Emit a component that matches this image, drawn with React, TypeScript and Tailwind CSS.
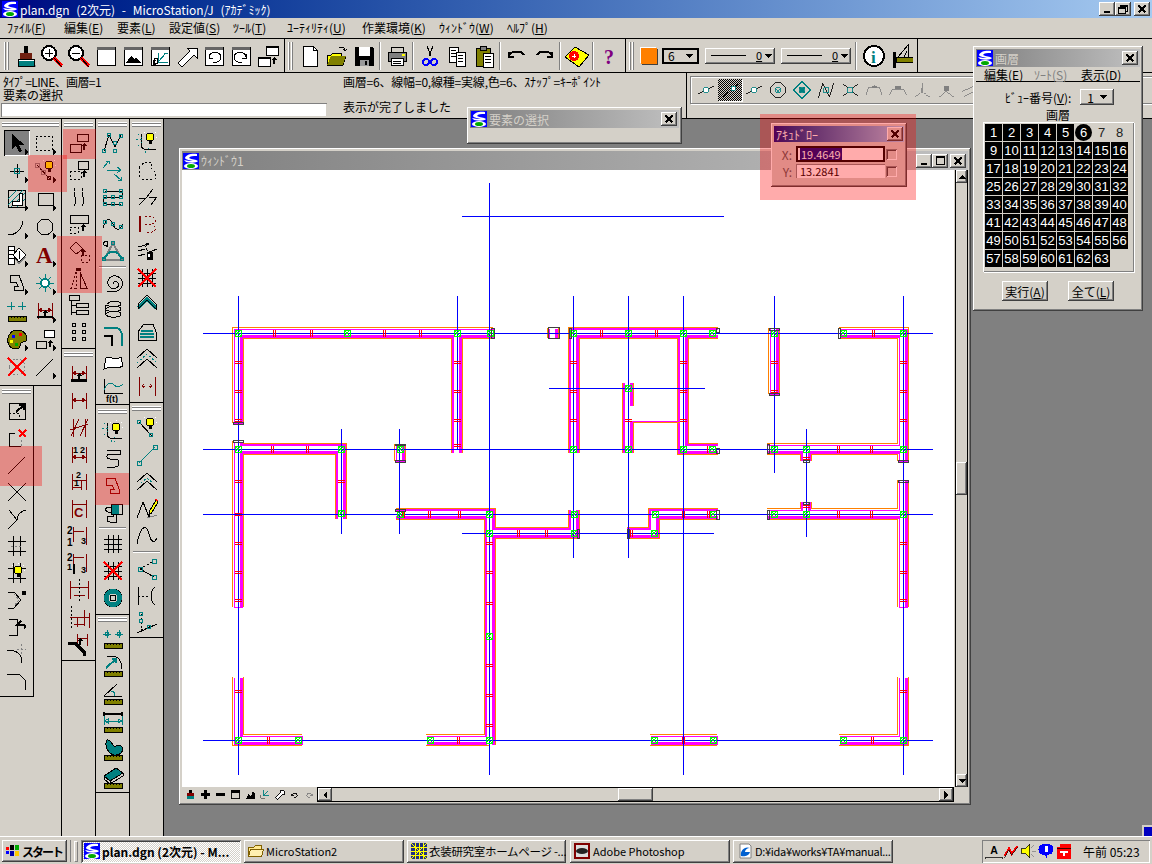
import React from "react";

const k = "#000", t = "#008080", r = "#800000", R = "#f00", g = "#808080", o = "#808000", y = "#ff0", w = "#fff", n = "#00f";
type P = [string, string, string?, number?, number?, number?];

const raised = "shadow-[inset_-1px_-1px_#404040,inset_1px_1px_#fff,inset_-2px_-2px_#808080]";
const sunken = "shadow-[inset_1px_1px_#808080,inset_-1px_-1px_#fff,inset_2px_2px_#404040]";

const c = (x: number, yy: number, rad: number) => `M${x - rad} ${yy}a${rad} ${rad} 0 1 0 ${2 * rad} 0a${rad} ${rad} 0 1 0 ${-2 * rad} 0Z`;
const sq = (x: number, yy: number, s = 1.5) => `M${x - s} ${yy - s}h${2 * s}v${2 * s}h${-2 * s}Z`;
const tri: P[] = [[k, "M20 18L23 21L20 24Z", "f"]];
const ruler: P[] = [[o, "M3 17H21V22H3Z", "f"], [k, "M3 17H21V22H3Z M6 17V19 M9 17V19 M12 17V19 M15 17V19 M18 17V19"]];
const dim: P[] = [[r, "M5 4V20 M19 4V20 M5 11H19"], [r, "M5 11l4-2.5v5Z M19 11l-4-2.5v5Z", "f"]];
const up = (x: number, yy: number): P => [k, `M${x} ${yy}l-3 3h2v4h2v-4h2Z`, "f"];
const bulb = (x: number, yy: number): P[] => [[y, c(x, yy, 4), "f"], [k, c(x, yy, 4)], [k, `M${x - 1.5} ${yy + 4}h3v3h-3Z`, "f"], [w, `M${x} ${yy - 6}v-1 M${x + 5} ${yy - 4}l1-1 M${x - 5} ${yy - 4}l-1-1 M${x + 6} ${yy}h1`]];
const grid: P = [k, "M7 3V21 M12 3V21 M17 3V21 M3 7H21 M3 12H21 M3 17H21"];
const redX: P = [R, "M3 3L21 21 M21 3L3 21", "2"];

function Ico({ p, s = 24 }: { p: P[]; s?: number }) {
  return (
    <svg width={s} height={s} viewBox="0 0 24 24" shapeRendering="crispEdges" className="block">
      {p.map((i, idx) =>
        i[2] === "t" ? (
          <text key={idx} x={i[3]} y={i[4]} fontSize={i[5]} fill={i[0]} fontFamily={(i[5] ?? 0) >= 17 ? "Liberation Serif" : "Liberation Sans"} fontWeight="bold">{i[1]}</text>
        ) : (
          <path
            key={idx}
            d={i[1]}
            fill={i[2] === "f" ? i[0] : "none"}
            stroke={i[2] === "f" ? "none" : i[0]}
            strokeWidth={i[2] === "2" ? 2 : i[2] === "3" ? 3 : 1}
            strokeDasharray={i[2] === "d" ? "2 2" : undefined}
          />
        )
      )}
    </svg>
  );
}

function Logo({ s = 16 }: { s?: number }) {
  return (
    <svg width={s} height={s} viewBox="0 0 16 16" className="block shrink-0">
      <rect width="16" height="16" fill="#00f" />
      <path d="M2 5C3 1 10 0 14 1L14 3C10 3 7 3 6 5C9 7 13 6 15 8C14 10 8 10 3 9L1 7C5 8 8 8 10 8C7 7 3 7 2 5Z" fill="#fff" />
      <ellipse cx="8" cy="13" rx="7" ry="3" fill="#fff" />
      <ellipse cx="8" cy="13" rx="4" ry="2" fill="#0a0" />
    </svg>
  );
}

function Arrow({ dir }: { dir: "u" | "d" | "l" | "r" }) {
  const d = dir === "u" ? "M4 2L0 6H8Z" : dir === "d" ? "M0 2H8L4 6Z" : dir === "l" ? "M6 0V8L2 4Z" : "M2 0V8L6 4Z";
  return <svg width="8" height="8" viewBox="0 0 8 8" shapeRendering="crispEdges"><path d={d} fill="#000" /></svg>;
}

function CloseBtn({ className = "" }: { className?: string }) {
  return (
    <div className={`w-[16px] h-[14px] bg-[#d4d0c8] flex items-center justify-center ${raised} ${className}`}>
      <svg width="8" height="8" viewBox="0 0 8 8" shapeRendering="crispEdges"><path d="M0.5 0.5L7.5 7.5M7.5 0.5L0.5 7.5" stroke="#000" strokeWidth="1.6" /></svg>
    </div>
  );
}

const win: P[] = [[w, "M3 3H21V21H3Z", "f"], [k, "M3 3H21V21H3Z"], ["#666", "M3 3H21V6H3Z", "f"]];

const tools1: P[][] = [
  [["#999", "M8 21H23V23H8Z", "f"], [k, "M11 2H15V9H11Z", "f"], ["#702010", "M7 9H19V15H7Z", "f"], [w, "M5 15H21V17H5Z", "f"], [t, "M5 17H21V22H5Z", "f"], [k, "M5 15H21V22H5Z"]],
  [[w, c(9, 9, 7), "f"], [k, c(9, 9, 7), "2"], [k, "M5 9H13 M9 5V13"], [R, "M14 14L22 22", "3"], [k, "M14 14L22 23"]],
  [[w, c(9, 9, 7), "f"], [k, c(9, 9, 7), "2"], [k, "M5 9H13"], [R, "M14 14L22 22", "3"], [k, "M14 14L22 23"]],
  win,
  [...win, [k, "M5 19L10 12L13 15L15 13L20 19Z", "f"]],
  [...win, [k, "M5 20V16H8 M5 20H8"], [t, "M10 9V18H20 M10 18L18 9 M16 9L20 9"], [k, "M6 14H9V19H6Z"]],
  [[w, "M3 19L15 7L12 4H22V14L19 11L7 23Z", "f"], [k, "M3 19L15 7L12 4H22V14L19 11L7 23Z"]],
  [...win, [k, "M7 13a6 5 0 1 1 4 5 M7 10V14H11"]],
  [...win, [k, "M17 13a6 5 0 1 0 -4 5 M17 10V14H13"]],
  [[w, "M10 2H22V11H10Z", "f"], [k, "M10 2H22V11H10Z"], [k, "M10 2H22V4H10Z", "f"], [w, "M2 13H14V22H2Z", "f"], [k, "M2 13H14V22H2Z"], [k, "M2 13H14V15H2Z", "f"], up(18, 13)],
];
const tools2: P[][] = [
  [[w, "M5 2H15L19 6V22H5Z", "f"], [k, "M5 2H15L19 6V22H5Z M15 2V6H19"]],
  [[y, "M2 11H6L8 9H16V12H21L18 21H2Z", "f"], [k, "M2 11H6L8 9H16V12H21L18 21H2Z"], [o, "M2 21L6 12H21L18 21Z", "f"], [k, "M14 4C17 2 20 3 20 7M20 7L18 5M20 7L22 5"]],
  [[k, "M3 3H20L22 5V22H3Z", "f"], [w, "M7 3H18V12H7Z", "f"], ["#999", "M8 16H17V22H8Z", "f"], [k, "M13 17H15V21H13Z", "f"]],
  [],
  [[k, "M6 3H18V8H6Z"], [g, "M3 8H21V17H3Z", "f"], [k, "M3 8H21V17H3Z"], [y, "M17 10H20V12H17Z", "f"], [w, "M6 14H18V21H6Z", "f"], [k, "M6 14H18V21H6Z M8 17H16 M8 19H16"]],
  [],
  [[k, "M9 2L13 12 M15 2L11 12"], [n, c(8, 18, 3), "2"], [n, c(16, 18, 3), "2"]],
  [[w, "M4 3H13V18H4Z", "f"], [k, "M4 3H13V18H4Z M6 6H11 M6 9H11 M6 12H11"], [w, "M11 8H20V22H11Z", "f"], [k, "M11 8H20V22H11Z M13 11H18 M13 14H18 M13 17H18"]],
  [[o, "M4 4H18V22H4Z", "f"], [k, "M4 4H18V22H4Z"], [g, "M8 2H14V6H8Z", "f"], [k, "M8 2H14V6H8Z"], [w, "M11 9H21V23H11Z", "f"], [k, "M11 9H21V23H11Z M13 12H19 M13 15H19 M13 18H19"]],
  [],
  [[k, "M4 12a8 6 0 0 1 15 -1 M4 8V13H9", "2"]],
  [[k, "M20 12a8 6 0 0 0 -15 -1 M20 8V13H15", "2"]],
  [],
  [[y, "M0 13L10 3L24 11L14 23Z", "f"], [k, "M0 13L10 3L24 11L14 23Z"], [R, c(9, 12, 5), "f"], [w, "M7 12h4M9 10v4"]],
  [],
  [["#800080", "?", "t", 6, 20, 20]],
];

const snaps: P[][] = [
  [[k, "M2 17L22 7"], [w, sq(12, 12, 2.5), "f"], [t, sq(12, 12, 2.5)]],
  [[k, "M2 21L22 5"], [w, sq(16, 10, 2.5), "f"], [t, sq(16, 10, 2.5)]],
  [[k, "M2 17L22 7"], [w, sq(12, 12, 2.5), "f"], [t, sq(12, 12, 2.5)]],
  [[k, c(12, 12, 9)], [t, "M9 9L15 15M15 9L9 15"], [t, sq(12, 12, 2.5)]],
  [[t, "M12 2L22 12L12 22L2 12Z M9 9L15 15M15 9L9 15", "2"], [t, sq(12, 12, 3)]],
  [[k, "M3 21L8 4L16 20L21 3"], [t, sq(12, 12, 3)]],
  [[k, "M3 5L10 11M21 5L14 11M3 19L10 13M21 19L14 13"], [t, sq(12, 12, 3)]],
  [[g, "M2 18L5 9H19L22 18 M12 9V6"], [g, "M9 7H15V9H9Z", "f"]],
  [[g, "M2 18L5 11H19L22 18"], [g, "M8 7H16V11H8Z", "f"]],
  [[g, "M3 20C8 18 11 16 12 10C13 16 16 18 21 20 M12 4V10"]],
  [[g, "M3 20C8 18 11 16 12 12C13 16 16 18 21 20"], [g, "M9 7H15V13H9Z", "f"]],
  [[g, "M2 14L20 6M5 20L22 11"]],
];

const col1a: P[][] = [
  [[k, "M7 3L7 18L11 14.5L14 21L17 20L14 13.5L19 13.5Z", "f"], ...tri],
  [[k, "M3 5H19V19H3Z", "d"], ...tri],
  [[k, "M12 5V19M5 12H19"], [t, sq(12, 12, 2.5)], ...tri],
  [[k, "M4 6L17 20"], [g, sq(4, 6, 2)], [g, sq(10, 13, 2)], [k, sq(16, 19, 1.5)], ...bulb(16, 6), ...tri],
  [[k, "M3 3H20V20H3Z"], [t, "M3 12L12 3M3 18L18 3M6 20L20 6M12 20L20 12"], [w, "M7 14H14V6H17V18H7Z", "f"], [k, "M7 14H14V6H17V18H7Z"], ...tri],
  [[k, "M5 6H20V18H5Z"], ...tri],
  [[k, "M3 20C11 20 17 14 18 6"], ...tri],
  [[k, c(12, 12, 8)], ...tri],
  [[w, "M3 3H9V21H3Z", "f"], [k, "M3 3H9V21H3Z M3 7H9M3 11H9M3 15H9"], [g, "M10 14L14 20L20 14", "2"], [w, "M14 5L21 12L14 19L8 12Z", "f"], [k, "M14 5L21 12L14 19L8 12Z M14 8V16"], ...tri],
  [[r, "A", "t", 3, 20, 23], ...tri],
  [[k, "M5 4H14L18 15V19H9V15H13L11 11H5Z"], ...tri],
  [[t, "M12 3V21M3 12H21M6 6L18 18M18 6L6 18"], [w, c(12, 12, 4), "f"], [t, c(12, 12, 4), "2"], ...tri],
  [[t, "M6 3V11M2 7H10M17 3V11M13 7H21"], ...ruler],
  [...dim, [k, "M4 17H20V19H4Z", "f"], up(12, 11), ...tri],
  [[o, "M12 3C19 3 22 8 22 12C22 16 18 14 16 16C14 18 17 22 11 22C5 22 2 17 3 11C4 6 8 3 12 3Z", "f"], [k, "M12 3C19 3 22 8 22 12C22 16 18 14 16 16C14 18 17 22 11 22C5 22 2 17 3 11C4 6 8 3 12 3Z"], [R, sq(15, 7), "f"], [n, sq(8, 9), "f"], [y, sq(6, 14), "f"], ["#0a0", sq(11, 17), "f"], ...tri],
  [[w, "M11 3H21V11H11Z", "f"], [k, "M11 3H21V10H11Z"], [k, "M3 14H13V21H3Z"], up(17, 13), ...tri],
  [[g, c(12, 12, 8), "d"], redX],
  [[k, "M3 21L20 4"], ...tri],
];
const col1b: P[][] = [
  [[k, "M4 4H20V20H4Z"], [k, "M4 14H14V20", "d"], [k, "M11 13L19 6M14 6H19V11", "2"]],
  [[k, "M4 7V20H16"], [k, "M4 7H10"], [R, "M14 4L21 11M21 4L14 11", "2"], [g, "M16 14V20", "d"]],
  [[k, "M3 21L20 4"]],
  [[k, "M3 3L21 21M21 3L3 21"]],
  [[k, "M3 22L12 13M12 13C12 7 17 4 21 3M4 3L12 13"]],
  [[k, "M3 7H21M3 17H21M8 2V22M15 2V22"], [g, "M6 12H17", "d"]],
  [[k, "M3 7H21M3 17H21M8 2V22M15 2V22"], ...bulb(13, 9)],
  [[k, "M3 4H9L16 12L9 20H3"], [g, "M9 6L14 12L9 18", "d"], [k, "M17 3H21V7H17Z", "f"]],
  [[k, "M4 4H12V20H4"], [k, "M16 6L12 10L16 10C20 9 21 12 19 14", "2"]],
  [[k, "M2 8C11 8 17 12 17 21"], [g, "M16 2V12M12 7H21", "d"]],
  [[k, "M2 5H14L20 11V21"]],
];
const col2a: P[][] = [
  [[k, "M10 3H21V10H10Z"], [k, "M3 13H14V21H3Z"], up(17, 12)],
  [[k, "M11 3H21V11H11Z"], [k, "M3 13H14V21H3Z", "d"], up(17, 12)],
  [[k, "M8 3C4 8 12 14 7 21M16 3C12 8 20 14 15 21"]],
  [[k, "M3 3H21V11H3Z"], [k, "M3 15H11V21H3Z", "d"], up(16, 12)],
  [[k, "M9 3L16 10L9 15L3 9Z"], [k, "M14 16H22V23H14Z", "d"], up(16, 10)],
  [[k, "M9 6L4 22H9Z", "d"], [k, "M13 6L20 22H13Z"], [k, "M9 2H14V5H9Z", "f"]],
  [[k, "M2 2H12V7H2Z M9 10H21V14H9Z M9 17H21V21H9Z M4 7V22 M4 12H9 M4 19H9"]],
  [[k, c(7, 5, 2) + c(17, 5, 2) + c(7, 12, 2) + c(17, 12, 2) + c(7, 19, 2) + c(17, 19, 2)]],
];
const col2b: P[][] = [
  [...dim, [k, "M4 17H20V20H4Z", "f"], up(12, 11)],
  dim,
  [[r, "M6 3V21M18 3V21M3 14L21 8M4 20L12 3M13 20L21 3"]],
  [...dim.map((d): P => [d[0], d[1].replace(/11/g, "14"), d[2]]), [k, "1", "t", 6, 10, 9], [k, "2", "t", 13, 10, 9]],
  [[r, "M5 4V20M19 4V20M5 10H19M5 17H14M14 10V20"], [k, "2", "t", 9, 8, 9], [k, "1", "t", 7, 16, 9]],
  [[r, "M5 3V21M19 3V21M5 7H19"], [r, "C", "t", 7, 20, 13]],
  [[r, "M6 7H17M6 3V18M19 3V21"], [k, "2", "t", 0, 10, 10], [k, "1", "t", 0, 22, 10], [k, "3", "t", 14, 20, 9]],
  [[r, "M6 6H17M6 3V14M19 3V21"], [k, "M6 13H8V23H6Z", "f"], [k, "2", "t", 0, 10, 10], [k, "1", "t", 0, 19, 9], [k, "3", "t", 14, 22, 9]],
  [[r, "M3 3V21M21 3V21M3 9H21M7 17H18"], [k, "M12 1V23", "d"]],
  [[r, "M17 5V21M22 8V23M3 12H22M7 19H18M10 12V22"], [k, "M4 1V23", "d"]],
  [[r, "M10 2V12M20 2V14M10 6H20"], [k, "M1 11H8L17 20V24", "3"], up(13, 6)],
];
const col3a: P[][] = [
  [[k, "M3 20L8 4L14 16L20 4"], [t, sq(3, 20) + sq(8, 4) + sq(14, 20) + sq(20, 5) + sq(14, 12)]],
  [[t, "M2 10L8 3M5 3H8V6M6 12H19M16 9L20 12L16 15M13 16L20 22M17 22H20V19"]],
  [[k, "M4 6H20C22 6 22 12 19 12H5C2 12 2 19 5 19H20"], [t, sq(4, 6) + sq(20, 6) + sq(4, 12) + sq(12, 12) + sq(20, 12) + sq(4, 19) + sq(12, 19) + sq(20, 19)]],
  [[k, "M2 16C6 2 10 8 12 12C14 18 18 20 22 12"], [t, sq(4, 10) + sq(12, 12) + sq(20, 15)]],
  [[g, "M3 21L12 4L21 21Z", "2"], [t, "M3 20C8 10 16 10 21 20", "2"], [t, sq(3, 20) + sq(12, 4) + sq(21, 20)], [k, "M5 8a2 3 0 1 0 -2 -2H6"]],
  [[k, "M13 13C11 11 15 9 17 12C19 16 14 19 10 17C5 14 6 7 12 5C18 4 23 9 21 15C19 21 11 22 6 20"]],
  [[k, "M6 6C10 2 20 3 20 6C20 9 8 9 5 7M5 11C9 7 20 8 20 11C20 14 8 14 5 12M5 16C9 12 20 13 20 16C20 20 8 20 5 17C3 15 5 10 5 7"]],
  [[t, "M3 3H14C19 3 21 6 21 12V21", "2"], [k, "M3 11H11V21", "2"]],
  [[w, "M5 6C9 4 14 9 20 5L22 14C16 18 11 13 3 17Z", "f"], [k, "M5 6C9 4 14 9 20 5L22 14C16 18 11 13 3 17Z"]],
  [[k, "M3 0V14H22"], [t, "M3 11C6 3 10 3 13 6C16 9 19 8 22 5"], [k, "f(t)", "t", 5, 23, 9]],
];
const col3b: P[][] = [
  [[k, "M6 3V14C6 18 10 19 21 19"], [t, "M1 8H8M3 3L7 7M3 15L7 11M10 20V23M13 17L16 20M13 22L16 19", "d"], ...bulb(15, 7)],
  [[k, "M6 3H19V7H9C5 7 5 12 9 12H14C19 12 19 20 14 20H6"]],
  [[r, "M5 4H14L18 15V19H9V15H13L11 11H5Z"]],
  [[k, "M10 3H21V13H15V21H9C5 21 5 15 9 15H12V11H7C4 11 4 6 7 6H10Z"], [t, "M10 5C12 2 17 2 18 5V13H10Z", "f"], [k, "M10 3H21V13H10Z"]],
  [grid],
  [grid, redX],
  [[t, c(12, 12, 6), "3"], [k, c(12, 12, 9)], [t, c(12, 12, 8), "2"], [k, c(12, 12, 3)]],
];
const col3c: P[][] = [
  [[t, "M6 4V12M2 8H10M18 4V12M14 8H22"], [t, sq(6, 8) + sq(18, 8)], ...ruler],
  [[k, "M6 2H10C17 2 21 7 21 15"], [t, "M5 14L15 5M11 5H15V9", "2"], ...ruler],
  [[k, "M3 14H21M3 14L16 2"], [t, "M14 14C14 11 13 10 12 9M10 10L12 9L13 11"], ...ruler],
  [[k, "M3 4H21M3 2V6M21 2V6", "2"], [t, "M3 6V15M21 6V15M3 11H21M3 11L7 9V13ZM21 11L17 9V13Z"], ...ruler],
  [[t, "M6 2C10 1 11 7 13 8C15 9 19 5 21 9C23 13 19 18 13 17C7 16 3 7 6 2Z", "f"], [k, "M6 2C10 1 11 7 13 8C15 9 19 5 21 9C23 13 19 18 13 17C7 16 3 7 6 2Z"], ...ruler],
  [[t, "M3 10L15 2L22 7L9 15Z", "f"], [k, "M3 10L15 2L22 7L9 15Z M3 10V13L9 18L22 10V7 M9 15V18"], ...ruler],
];
const col4a: P[][] = [
  [[k, "M6 3V14C6 18 10 19 21 19"], [t, "M1 8H8M3 3L7 7M3 15L7 11M10 20V23M13 17L16 20", "d"], ...bulb(15, 6)],
  [[k, "M10 4H16V10L20 14V21M4 9L10 4M4 9V21M7 21H17", "d"]],
  [[k, "M4 13H11L18 4M11 13L4 20M14 12L22 12M16 20L22 12"]],
  [[r, "M10 4H17L20 7V10L17 12L20 15V18L17 20H10M10 12H16", "d"], [r, "M5 4V20", "2"]],
  [[k, "M3 8L14 5M3 12L10 10M12 14L22 10M3 17L10 15M14 4C10 4 10 10 13 12"], [k, "M12 13H18V21H12Z", "f"], [w, "M13 15H15V18H13Z", "f"]],
  [grid, redX],
  [[t, "M3 15L12 6L21 15", "3"], [k, "M3 11L12 2L21 11L21 16L12 7L3 16Z"]],
  [[k, "M9 4H18L21 12V20H3V12Z"], [t, "M6 10H18V12H6ZM5 13H19V15H5ZM5 16H19V18H5Z", "f"]],
  [[k, "M2 11L12 2L22 11"], [t, "M2 16L12 7L22 16", "d"], [k, "M2 21L12 12L22 21"]],
  [[r, "M4 3V22M20 3V22"], [r, "M7 12H10M7 12L9 10M7 12L9 14M17 12H14M17 12L15 10M17 12L15 14"]],
];
const col4b: P[][] = [
  [[k, "M4 6L17 20"], [t, sq(4, 6) + sq(16, 19)], ...bulb(15, 6)],
  [[t, "M4 20L20 4"], [t, sq(4, 20, 2) + sq(20, 4, 2)]],
  [[k, "M2 12L12 3L22 12M2 20L12 11L22 20"], [t, "M6 13L12 8L18 13", "d"]],
  [[k, "M2 21L8 5L14 20L15 14"], [g, "M12 21L22 18"], [y, "M14 15L21 3L23 5L16 17Z", "f"], [k, "M14 15L21 3L23 5L16 17L14 15Z"], [R, "M20 2L23 4"]],
  [[k, "M2 20C6 -2 12 2 14 10C16 18 19 20 22 14"]],
  [[k, "M5 12L19 4", "d"], [k, "M5 12L19 20"], [t, sq(5, 12, 2) + sq(19, 4, 2) + sq(19, 20, 2)]],
  [[k, "M3 3V21M3 12H14", "d"], [k, "M3 3V21M20 3C15 7 15 17 20 21"]],
  [[k, "M6 3V19M6 19L22 13", "d"], [k, "M2 22L22 13"], [t, sq(6, 3) + sq(14, 16) + sq(6, 10)]],
];

function Grip({ h }: { h: string }) {
  return (
    <div className={`${h} flex flex-col justify-center px-[2px] shrink-0`}>
      <div className="h-[2px] border-b border-[#808080] bg-white" />
      <div className="h-[3px] border-b border-[#808080] bg-white" />
    </div>
  );
}

function Rows({ items, h }: { items: P[][]; h: string }) {
  return (
    <>
      {items.map((p, i) => (
        <div key={i} className={`${h} flex items-center justify-center`}><Ico p={p} /></div>
      ))}
    </>
  );
}

function Sep({ h }: { h: string }) {
  return <div className={`${h} flex flex-col justify-center px-[3px]`}><div className="h-[2px] bg-white border-t border-[#808080]" /></div>;
}

function Dock() {
  return (
    <div className="w-[164px] shrink-0 flex bg-[#d4d0c8]">
      <div className="w-[61px] flex flex-col">
        <div className="h-[267px] border-b border-black">
          <Grip h="h-[10px]" />
          <div className="grid grid-cols-[28px_28px] auto-rows-[28px] pl-[3px]">
            {col1a.map((p, i) => (
              <div key={i} className="flex items-center justify-center">
                {i === 0 ? (
                  <div className="relative w-[26px] h-[26px] bg-[#808080] flex items-center justify-center shadow-[inset_1px_1px_#000,inset_-1px_-1px_#fff]"><Ico p={p} /></div>
                ) : (
                  <Ico p={p} />
                )}
              </div>
            ))}
          </div>
        </div>
        <div className="w-[34px] h-[311px] border-r border-b border-black">
          <Grip h="h-[11px]" />
          <Rows items={col1b} h="h-[27px]" />
        </div>
      </div>
      <div className="w-[34px] border-l border-black">
        <div className="h-[230px] border-b border-black">
          <Grip h="h-[10px]" />
          <Rows items={col2a} h="h-[27px]" />
        </div>
        <div className="h-[312px] border-b border-black">
          <Grip h="h-[11px]" />
          <Rows items={col2b} h="h-[27px]" />
        </div>
      </div>
      <div className="w-[34px] border-l border-black">
        <div className="h-[286px] border-b border-black">
          <Grip h="h-[10px]" />
          <Rows items={col3a.slice(0, 5)} h="h-[27px]" />
          <Sep h="h-[5px]" />
          <Rows items={col3a.slice(5)} h="h-[27px]" />
        </div>
        <div className="h-[210px] border-b border-black">
          <Grip h="h-[13px]" />
          <Rows items={col3b.slice(0, 4)} h="h-[27px]" />
          <Sep h="h-[4px]" />
          <Rows items={col3b.slice(4)} h="h-[27px]" />
        </div>
        <div className="h-[178px] border-b border-black">
          <Grip h="h-[9px]" />
          <Rows items={col3c} h="h-[28px]" />
        </div>
      </div>
      <div className="w-[35px] border-l border-r border-black">
        <div className="h-[284px] border-b border-black">
          <Grip h="h-[10px]" />
          <Rows items={col4a} h="h-[27px]" />
        </div>
        <div className="h-[235px] border-b border-black">
          <Grip h="h-[11px]" />
          <Rows items={col4b.slice(0, 5)} h="h-[27px]" />
          <Sep h="h-[6px]" />
          <Rows items={col4b.slice(5)} h="h-[27px]" />
        </div>
      </div>
    </div>
  );
}

function VGrip() {
  return <div className="w-[5px] h-[28px] mx-[3px] flex gap-[1px] shrink-0"><div className="w-[2px] bg-white border-r border-[#808080]" /><div className="w-[2px] bg-white border-r border-[#808080]" /></div>;
}

function TBar({ items }: { items: P[][] }) {
  return (
    <>
      {items.map((p, i) =>
        p.length === 0 ? (
          <div key={i} className="w-[6px] h-[28px] flex justify-center"><div className="w-[2px] bg-white border-l border-[#808080]" /></div>
        ) : (
          <div key={i} className="w-[27px] flex justify-center"><Ico p={p} /></div>
        )
      )}
    </>
  );
}

function Combo({ label, v, cls }: { label?: boolean; v: string; cls: string }) {
  return (
    <div className={`h-[16px] bg-[#d4d0c8] flex items-center ${raised} ${cls}`}>
      {label && <div className="w-[35px] h-px bg-black ml-[6px] mr-[10px]" />}
      <span className="underline leading-none text-[11px] mr-[2px]">{v}</span>
      <Arrow dir="d" />
    </div>
  );
}

// 外側に白い隙間が残る壁
const lightWalls = [
  "238,423 238,333 493,333",
  "238,441 238,607",
  "400,444 400,461",
  "774,328 774,394",
  "839,333 903,333 903,461",
  "767,449 903,449",
  "903,480 903,607",
  "767,514 903,514",
  "238,677 238,740 302,740",
  "426,740 490,740",
  "650,740 717,740",
  "839,740 903,740 903,677",
  "553,328 553,338",
];
// 両側ともマゼンタが太い壁
const heavyWalls = [
  "457,333 457,453",
  "238,449 341,449 341,519",
  "396,514 490,514 490,745",
  "490,533 574,533 574,510",
  "627,533 654,533 654,514 718,514",
  "574,453 574,333 718,333",
  "683,333 683,449 718,449",
  "628,383 628,453",
  "806,449 806,461",
  "806,502 806,514",
];
const walls = [...lightWalls, ...heavyWalls];
const blueH = [[462, 216, 724], [203, 333, 933], [203, 449, 933], [203, 514, 933], [203, 740, 933], [549, 388, 705], [462, 533, 714]];
const blueV = [[238, 296, 775], [489, 183, 775], [457, 296, 449], [341, 429, 534], [399, 429, 534], [573, 296, 558], [628, 296, 558], [683, 296, 775], [774, 296, 473], [806, 429, 537], [903, 296, 775]];
const tickV = [[274, 333], [311, 333], [384, 333], [420, 333], [272, 449], [307, 449], [403, 514], [429, 514], [459, 514], [518, 533], [546, 533], [601, 333], [656, 333], [873, 333], [838, 449], [871, 449], [838, 514], [871, 514], [708, 449], [683, 514], [708, 514], [631, 533], [268, 740], [458, 740], [683, 740], [872, 740]];
const tickH = [[238, 362], [238, 391], [238, 420], [238, 481], [238, 514], [238, 543], [238, 572], [238, 600], [457, 362], [457, 391], [457, 420], [457, 445], [341, 481], [573, 362], [573, 391], [573, 420], [683, 362], [683, 391], [683, 420], [628, 420], [774, 362], [774, 391], [903, 362], [903, 391], [903, 420], [903, 543], [903, 572], [903, 600], [489, 543], [489, 572], [489, 603], [489, 665], [489, 695], [489, 725], [238, 691], [903, 691], [806, 458], [806, 506]];
const greens = [[238, 333], [347, 333], [457, 333], [490, 333], [238, 449], [341, 449], [341, 513], [400, 449], [400, 514], [489, 514], [489, 533], [573, 333], [628, 333], [683, 333], [712, 333], [628, 388], [573, 449], [628, 449], [683, 449], [712, 449], [774, 333], [843, 333], [903, 333], [774, 449], [806, 449], [903, 449], [574, 514], [574, 533], [655, 514], [654, 533], [713, 514], [774, 514], [806, 514], [903, 514], [238, 740], [298, 740], [430, 740], [489, 740], [489, 636], [654, 740], [713, 740], [843, 740], [903, 740]];
const ends = [[233, 422, 10, 2], [233, 440, 10, 2], [491, 328, 3, 10], [548, 327, 11, 11], [569, 328, 2, 10], [716, 328, 3, 4], [716, 448, 3, 5], [395, 444, 10, 1], [395, 460, 10, 2], [395, 509, 10, 2], [769, 393, 10, 2], [769, 328, 10, 2], [838, 328, 2, 10], [767, 444, 2, 9], [803, 460, 6, 2], [803, 502, 6, 2], [898, 460, 10, 2], [898, 480, 10, 2], [767, 510, 2, 9], [716, 510, 3, 9], [627, 529, 2, 9], [577, 529, 2, 9]];

function Plan() {
  const pts = { fill: "none", strokeLinejoin: "miter" as const };
  return (
    <svg width="772" height="617" viewBox="182 170 772 617" shapeRendering="crispEdges" className="block">
      <g {...pts} stroke="#ff8000" strokeWidth="12">{walls.map((p, i) => <polyline key={i} points={p} />)}</g>
      <g {...pts} stroke="#fff" strokeWidth="10">{lightWalls.map((p, i) => <polyline key={i} points={p} />)}</g>
      <g {...pts} stroke="#f0f" strokeWidth="9" transform="translate(0.5 0.5)">{lightWalls.map((p, i) => <polyline key={i} points={p} />)}</g>
      <g {...pts} stroke="#f0f" strokeWidth="10">{heavyWalls.map((p, i) => <polyline key={i} points={p} />)}</g>
      <g {...pts} stroke="#fff" strokeWidth="5" transform="translate(-0.5 -0.5)">{walls.map((p, i) => <polyline key={i} points={p} />)}</g>
      <path d="M630 406H636V421H630Z" fill="#fff" />
      <path d="M633 422H680" stroke="#ff8000" />
      <path d="M633 421H680" stroke="#f0f" />
      {blueH.map(([a, b, e], i) => <path key={i} d={`M${a} ${b}H${e}`} stroke="#00f" />)}
      {blueV.map(([a, b, e], i) => <path key={i} d={`M${a} ${b}V${e}`} stroke="#00f" />)}
      {tickV.map(([a, b], i) => <path key={i} d={`M${a - 1} ${b - 3}v7M${a + 1} ${b - 3}v7`} stroke="#f00" />)}
      {tickH.map(([a, b], i) => <path key={i} d={`M${a - 3} ${b - 1}h7M${a - 3} ${b + 1}h7`} stroke="#f00" />)}
      {greens.map(([a, b], i) => <path key={i} d={`M${a - 3} ${b - 3}h6v6h-6ZM${a - 3} ${b - 3}l6 6M${a + 3} ${b - 3}l-6 6`} fill="none" stroke="#0f0" />)}
      {ends.map(([a, b, e, f], i) => <rect key={i} x={a} y={b} width={e} height={f} fill="none" stroke="#404040" />)}
    </svg>
  );
}

const miniIcons: P[][] = [
  [[k, "M8 2H16V9H8Z", "f"], [r, "M5 9H19V15H5Z", "f"], [t, "M5 15H19V22H5Z", "f"]],
  [[k, "M9 3H15V9H21V15H15V21H9V15H3V9H9Z", "f"]],
  [[k, "M3 9H21V15H3Z", "f"]],
  [[k, "M3 3H21V21H3Z", "2"], [k, "M3 3H21V8H3Z", "f"]],
  [[k, "M2 21L8 11L13 15L17 6L22 10V21Z", "f"]],
  [[k, "M4 12V20H12"], [t, "M10 3V15H22M10 15L20 5", "2"]],
  [[w, "M3 19L15 7L12 4H22V14L19 11L7 23Z", "f"], [k, "M3 19L15 7L12 4H22V14L19 11L7 23Z", "2"]],
  [[k, "M6 14a6 5 0 1 1 5 5M6 10V15H11", "2"]],
  [[g, "M18 14a6 5 0 1 0 -5 5M18 10V15H13", "2"]],
];

export default function App() {
  const menus = [["ﾌｧｲﾙ", "F"], ["編集", "E"], ["要素", "L"], ["設定値", "S"], ["ﾂｰﾙ", "T"], ["ﾕｰﾃｨﾘﾃｨ", "U"], ["作業環境", "K"], ["ｳｨﾝﾄﾞｳ", "W"], ["ﾍﾙﾌﾟ", "H"]];
  const layers = Array.from({ length: 63 }, (_, i) => i + 1);
  return (
    <div className="relative w-[1152px] h-[864px] overflow-hidden flex flex-col bg-[#d4d0c8] text-black text-[12px] leading-[13px] [font-family:'Noto_Sans_CJK_JP','Liberation_Sans',sans-serif]">
      {/* タイトルバー */}
      <div className="h-[18px] shrink-0 flex items-center bg-gradient-to-r from-[#000080] to-[#a6caf0] pl-[2px]">
        <Logo />
        <span className="ml-[2px] text-white text-[12px] whitespace-pre [word-spacing:4px]">plan.dgn (2次元) - MicroStation/J (ｱｶﾃﾞﾐｯｸ)</span>
        <div className="ml-auto flex items-center pr-[2px]">
          <div className={`w-[16px] h-[14px] bg-[#d4d0c8] flex items-end justify-center pb-[3px] ${raised}`}><div className="w-[6px] h-[2px] bg-black" /></div>
          <div className={`w-[16px] h-[14px] bg-[#d4d0c8] flex items-center justify-center ${raised}`}>
            <svg width="10" height="9" viewBox="0 0 10 9" shapeRendering="crispEdges"><path d="M2.5 2.5V0.5H9.5V6.5H7.5M0.5 2.5H7.5V8.5H0.5ZM0.5 3.5H7.5M2.5 1.5H9.5" fill="none" stroke="#000" /></svg>
          </div>
          <CloseBtn className="ml-[3px]" />
        </div>
      </div>

      {/* メニュー */}
      <div className="h-[20px] shrink-0 grid grid-cols-[57px_53px_52px_64px_54px_75px_77px_68px_auto] items-center pl-[7px] pb-[1px]">
        {menus.map(([a, b]) => <span key={b} className="whitespace-nowrap">{a}(<u>{b}</u>)</span>)}
      </div>

      {/* ツールバー */}
      <div className="h-[35px] shrink-0 flex items-center border-y border-black">
        <div className="w-[285px] h-full flex items-center pl-[0.5px] border-r border-black">
          <VGrip />
          <TBar items={tools1} />
        </div>
        <div className="w-[341px] h-full flex items-center border-r border-black">
          <VGrip />
          <TBar items={tools2} />
        </div>
        <div className="w-[292px] h-full flex items-center border-r border-black">
          <VGrip />
          <div className="w-[16px] h-[16px] bg-[#ff8000] ml-[4px] shadow-[-1px_-1px_#fff,1px_1px_#404040]" />
          <div className="ml-[5px] w-[37px] h-[16px] border-2 border-black flex items-center justify-between px-[4px]"><span className="text-[12px]">6</span><Arrow dir="d" /></div>
          <Combo label v="0" cls="ml-[6px] w-[70px]" />
          <Combo label v="0" cls="ml-[6px] w-[70px]" />
          <div className="w-[2px] h-[28px] bg-white border-l border-[#808080] ml-[4px]" />
          <div className="w-[27px] ml-[3px] flex justify-center">
            <Ico p={[[w, c(12, 12, 10), "f"], [k, c(12, 12, 10), "2"], [t, "i", "t", 9, 19, 17]]} />
          </div>
          <div className="w-[27px] flex justify-center">
            <Ico p={[[k, "M4 8H7V24H4Z", "f"], [o, "M7 13H24V18H7Z", "f"], [k, "M7 13H24V18H7Z"], [k, "M9 13L19 1V13H15L18 7", ""]]} />
          </div>
        </div>
      </div>

      {/* ステータス */}
      <div className="h-[46px] shrink-0 flex border-b border-black">
        <div className="w-[343px] pt-[2px]">
          <div className="pl-[3px] h-[13px] whitespace-nowrap tracking-[-0.6px]">ﾀｲﾌﾟ=LINE、画層=1</div>
          <div className="pl-[3px] h-[13px] whitespace-nowrap">要素の選択</div>
          <div className="ml-[1px] mt-[2px] w-[326px] h-[14px] bg-white shadow-[inset_1px_1px_#808080,inset_-1px_-1px_#d4d0c8]" />
        </div>
        <div className="w-[343px] pt-[2px]">
          <div className="h-[13px] whitespace-nowrap tracking-[-0.2px]">画層=6、線幅=0,線種=実線,色=6、ｽﾅｯﾌﾟ=ｷｰﾎﾟｲﾝﾄ</div>
          <div className="mt-[12px] h-[13px] whitespace-nowrap">表示が完了しました</div>
        </div>
        <div className="flex-1 border-l border-black pt-[3px] pl-[3px] overflow-hidden">
          <div className="h-[28px] w-[500px] flex items-center pl-[3px] border border-[#808080] shadow-[1px_1px_#fff,inset_1px_1px_#fff]">
            {snaps.map((p, i) => (
              <div key={i} className={`w-[24px] h-[22px] flex items-center justify-center ${i === 1 ? "bg-[repeating-conic-gradient(#000_0_25%,#d4d0c8_0_50%)] bg-[length:2px_2px] shadow-[1px_1px_#fff]" : ""}`}><Ico p={p} s={20} /></div>
            ))}
          </div>
        </div>
      </div>

      {/* 作業領域 */}
      <div className="flex-1 flex min-h-0">
        <Dock />
        <div className="flex-1 bg-[#808080]" />
      </div>

      {/* タスクバー */}
      <div className="h-[28px] shrink-0 flex items-center border-t border-white pl-[2px] pt-[1px] whitespace-nowrap">
        <div className={`w-[65px] h-[22px] flex items-center pl-[3px] font-bold ${raised}`}>
          <svg width="16" height="14" viewBox="0 0 16 14" shapeRendering="crispEdges" className="shrink-0"><path d="M1 3h3v3H1Z" fill="#f00" /><path d="M1 7h3v3H1Z" fill="#00f" /><path d="M5 1h4v5H5Z" fill="#000" /><path d="M10 1h4v5h-4Z" fill="#0a0" /><path d="M5 7h4v5H5Z" fill="#00a" /><path d="M10 7h4v5h-4Z" fill="#fc0" /></svg>
          <span className="ml-[1px] tracking-[-2px]">スタート</span>
        </div>
        <div className="ml-[3px] w-px h-[22px] bg-[#808080]" />
        <div className="ml-[3px] w-[3px] h-[20px] bg-[#d4d0c8] shadow-[1px_1px_#808080,inset_1px_1px_#fff]" />
        <div className={`ml-[4px] w-[160px] h-[23px] flex items-center pl-[3px] font-bold bg-[repeating-conic-gradient(#fff_0_25%,#d4d0c8_0_50%)] bg-[length:2px_2px] ${sunken}`}>
          <Logo /><span className="ml-[2px] whitespace-pre">plan.dgn (2次元) - M...</span>
        </div>
        <div className={`ml-[3px] w-[160px] h-[23px] flex items-center pl-[4px] ${raised}`}>
          <svg width="16" height="14" viewBox="0 0 16 14" shapeRendering="crispEdges" className="shrink-0"><path d="M0.5 3.5H5.5L7.5 1.5H13.5V12.5H0.5Z" fill="#ffe890" stroke="#806000" /><path d="M2.5 5.5H15.5L13.5 12.5H0.5Z" fill="#fff0b0" stroke="#806000" /></svg>
          <span className="ml-[2px] text-[11px]">MicroStation2</span>
        </div>
        <div className={`ml-[3px] w-[159px] h-[23px] flex items-center pl-[4px] overflow-hidden ${raised}`}>
          <svg width="16" height="16" viewBox="0 0 16 16" shapeRendering="crispEdges" className="shrink-0"><rect width="16" height="16" fill="#203080" /><path d="M0 0L16 16M16 0L0 16M8 0V16M0 8H16M4 0V16M12 0V16M0 4H16M0 12H16" stroke="#ff0" /></svg>
          <span className="ml-[2px] text-[11.5px] tracking-[-0.3px]">衣装研究室ホームページ -...</span>
        </div>
        <div className={`ml-[4px] w-[160px] h-[23px] flex items-center pl-[4px] ${raised}`}>
          <svg width="16" height="16" viewBox="0 0 16 16" className="shrink-0"><rect width="16" height="16" fill="#800000" /><rect x="2" y="2" width="12" height="12" fill="#ddd" /><ellipse cx="8" cy="8" rx="6" ry="3" fill="#222" /></svg>
          <span className="ml-[3px] text-[11px]">Adobe Photoshop</span>
        </div>
        <div className={`ml-[3px] w-[160px] h-[23px] flex items-center pl-[4px] ${raised}`}>
          <svg width="16" height="16" viewBox="0 0 16 16" className="shrink-0"><path d="M3 1H12L14 3V15H3Z" fill="#fff" stroke="#808080" /><path d="M4 13C3 7 8 3 13 5C10 5 8 7 8 9H13C12 13 7 14 4 13Z" fill="#0060d0" /></svg>
          <span className="ml-[2px] text-[11px] tracking-[-0.3px]">D:¥ida¥works¥TA¥manual...</span>
        </div>
        <div className="ml-auto mr-[2px] w-[168px] h-[23px] flex items-center pl-[3px] shadow-[inset_1px_1px_#808080,inset_-1px_-1px_#fff]">
          <Ico s={18} p={[[k, "A", "t", 7, 16, 14], [k, "M1 22V20H23V22"]]} />
          <Ico s={16} p={[[R, "M2 20L9 8L13 16L22 4", "3"], [k, "M2 22L9 10L13 18L22 6"]]} />
          <Ico s={18} p={[[y, "M3 9H8L14 3V21L8 15H3Z", "f"], [k, "M3 9H8L14 3V21L8 15H3Z"], [g, "M16 8L20 4M17 12H22M16 16L20 20"]]} />
          <Ico s={18} p={[[n, "M2 10C2 4 8 2 12 2C18 2 22 5 22 10C22 15 18 17 14 17L13 22L10 17C5 17 2 15 2 10Z", "f"], [w, "M11 5H14V13H11Z", "f"]]} />
          <Ico s={18} p={[[R, "M3 6H21V22H3Z", "f"], [R, "M6 2H21V6H6Z", "f"], [k, "M3 8H21"], [w, "M7 12H17V14H13V19H11V14H7Z", "f"]]} />
          <span className="ml-[10px] whitespace-pre">午前 05:23</span>
        </div>
      </div>

      {/* 図面ウィンドウ */}
      <div className={`absolute left-[179px] top-[148px] w-[792px] h-[657px] bg-[#d4d0c8] p-[3px] flex flex-col ${raised}`}>
        <div className="h-[19px] shrink-0 flex items-center bg-gradient-to-r from-[#808080] to-[#c0c0c0] pl-[1px]">
          <Logo />
          <span className="ml-[2px] text-[#d4d0c8]">ｳｨﾝﾄﾞｳ1</span>
          <div className="ml-auto flex items-center pr-[2px]">
            <div className={`w-[16px] h-[14px] bg-[#d4d0c8] flex items-end justify-center pb-[3px] ${raised}`}><div className="w-[6px] h-[2px] bg-black" /></div>
            <div className={`w-[16px] h-[14px] bg-[#d4d0c8] flex items-center justify-center ${raised}`}><div className="w-[9px] h-[9px] border border-black border-t-2" /></div>
            <CloseBtn className="ml-[2px]" />
          </div>
        </div>
        <div className="flex-1 flex min-h-0">
          <div className="w-[772px] bg-white"><Plan /></div>
          <div className="ml-[1px] w-[14px] flex flex-col border-x border-black bg-[#d4d0c8]">
            <div className={`h-[13px] flex items-center justify-center ${raised}`}><Arrow dir="u" /></div>
            <div className="h-[279px]" />
            <div className={`h-[33px] ${raised}`} />
            <div className="flex-1" />
            <div className={`h-[13px] flex items-center justify-center ${raised}`}><Arrow dir="d" /></div>
          </div>
        </div>
        <div className="h-[15px] shrink-0 flex">
          <div className="w-[135px] flex items-center pl-[1px]">
            {miniIcons.map((p, i) => <div key={i} className="w-[15px] flex justify-center"><Ico p={p} s={11} /></div>)}
          </div>
          <div className="w-[637px] flex border border-black">
            <div className={`w-[14px] flex items-center justify-center ${raised}`}><Arrow dir="l" /></div>
            <div className="w-[286px]" />
            <div className={`w-[35px] ${raised}`} />
            <div className="flex-1" />
            <div className={`w-[14px] flex items-center justify-center ${raised}`}><Arrow dir="r" /></div>
          </div>
        </div>
      </div>

      {/* 要素の選択 */}
      <div className={`absolute left-[467px] top-[107px] w-[215px] h-[37px] bg-[#d4d0c8] p-[3px] ${raised}`}>
        <div className="h-[18px] flex items-center bg-gradient-to-r from-[#808080] to-[#c0c0c0] pl-[1px]">
          <Logo />
          <span className="ml-[2px] text-[#d4d0c8]">要素の選択</span>
          <CloseBtn className="ml-auto mr-[2px]" />
        </div>
      </div>

      {/* アキュドロー */}
      <div className={`absolute left-[771px] top-[123px] w-[136px] h-[64px] bg-[#d4d0c8] p-[3px] ${raised}`}>
        <div className="h-[16px] flex items-center bg-gradient-to-r from-[#000080] to-[#a6caf0] pl-[2px]">
          <span className="text-white text-[12px]">ｱｷｭﾄﾞﾛｰ</span>
          <CloseBtn className="ml-auto mr-[1px] w-[14px] h-[12px]" />
        </div>
        <div className="mt-[4px] grid grid-cols-[21px_89px_12px] gap-x-[1px] gap-y-[2px] items-center">
          <span className="text-right pr-[3px] text-[#555]">X:</span>
          <div className="h-[16px] border-2 border-black bg-white flex items-center pl-[2px]"><span className="bg-[#000080] text-white px-[1px] text-[11px] leading-[12px]">19.4649</span></div>
          <div className={`w-[11px] h-[11px] ${sunken}`} />
          <span className="text-right pr-[3px] text-[#555]">Y:</span>
          <div className="h-[14px] bg-white flex items-center pl-[4px] text-[11px] shadow-[inset_1px_1px_#808080]">13.2841</div>
          <div className={`w-[11px] h-[11px] ${sunken}`} />
        </div>
      </div>

      {/* 画層 */}
      <div className={`absolute left-[973px] top-[46px] w-[170px] h-[265px] bg-[#d4d0c8] p-[3px] ${raised}`}>
        <div className="h-[18px] flex items-center bg-gradient-to-r from-[#808080] to-[#c0c0c0] pl-[1px]">
          <Logo />
          <span className="ml-[2px] text-[#d4d0c8]">画層</span>
          <CloseBtn className="ml-auto mr-[2px]" />
        </div>
        <div className="h-[15px] grid grid-cols-[50px_47px_auto] items-center pl-[8px] border-b border-black whitespace-nowrap">
          <span>編集(<u>E</u>)</span>
          <span className="text-[#808080]">ｿｰﾄ(<u>S</u>)</span>
          <span>表示(<u>D</u>)</span>
        </div>
        <div className="mt-[7px] h-[16px] flex items-center pl-[29px]">
          <span className="w-[75px] whitespace-nowrap">ﾋﾞｭｰ番号(<u>V</u>):</span>
          <div className={`w-[34px] h-[16px] flex items-center justify-center gap-[5px] ${raised}`}><span>1</span><Arrow dir="d" /></div>
        </div>
        <div className="h-[17px] flex items-end justify-center pb-[1px]">画層</div>
        <div className="mx-[7px] w-[151px] h-[150px] pl-[2px] pt-[2px] shadow-[inset_1px_1px_#fff,inset_-1px_-1px_#808080,1px_1px_#fff] grid grid-cols-[repeat(8,18px)] auto-rows-[18px]">
          {layers.map((v) => (
            <div key={v} className={`w-[17px] h-[17px] flex items-center justify-center text-[13px] [font-family:'Liberation_Sans',sans-serif] ${v === 7 || v === 8 ? "text-[#222]" : "bg-black text-white"} ${v === 6 ? "rounded-full" : ""}`}>{v}</div>
          ))}
        </div>
        <div className="mt-[9px] flex pl-[26px] gap-[20px]">
          <div className={`w-[46px] h-[20px] flex items-center justify-center ${raised}`}><span>実行(<u>A</u>)</span></div>
          <div className={`w-[46px] h-[20px] flex items-center justify-center ${raised}`}><span>全て(<u>L</u>)</span></div>
        </div>
      </div>

      {/* 画面右下の別ウィンドウ */}
      <div className="absolute left-[1142px] top-[825px] w-[10px] h-[11px] bg-[#d4d0c8] pl-[2px] pt-[2px]"><div className="w-full h-full bg-[#0000c0]" /></div>

      {/* 赤い注釈 */}
      <div className="absolute left-[28px] top-[155px] w-[39px] h-[37px] bg-[rgba(255,0,0,0.33)]" />
      <div className="absolute left-[63px] top-[129px] w-[33px] h-[30px] bg-[rgba(255,0,0,0.33)]" />
      <div className="absolute left-[57px] top-[236px] w-[45px] h-[57px] bg-[rgba(255,0,0,0.33)]" />
      <div className="absolute left-0 top-[446px] w-[42px] h-[40px] bg-[rgba(255,0,0,0.33)]" />
      <div className="absolute left-[95px] top-[473px] w-[34px] h-[32px] bg-[rgba(255,0,0,0.33)]" />
      <div className="absolute left-[760px] top-[114px] w-[156px] h-[86px] bg-[rgba(255,0,0,0.33)]" />
    </div>
  );
}
